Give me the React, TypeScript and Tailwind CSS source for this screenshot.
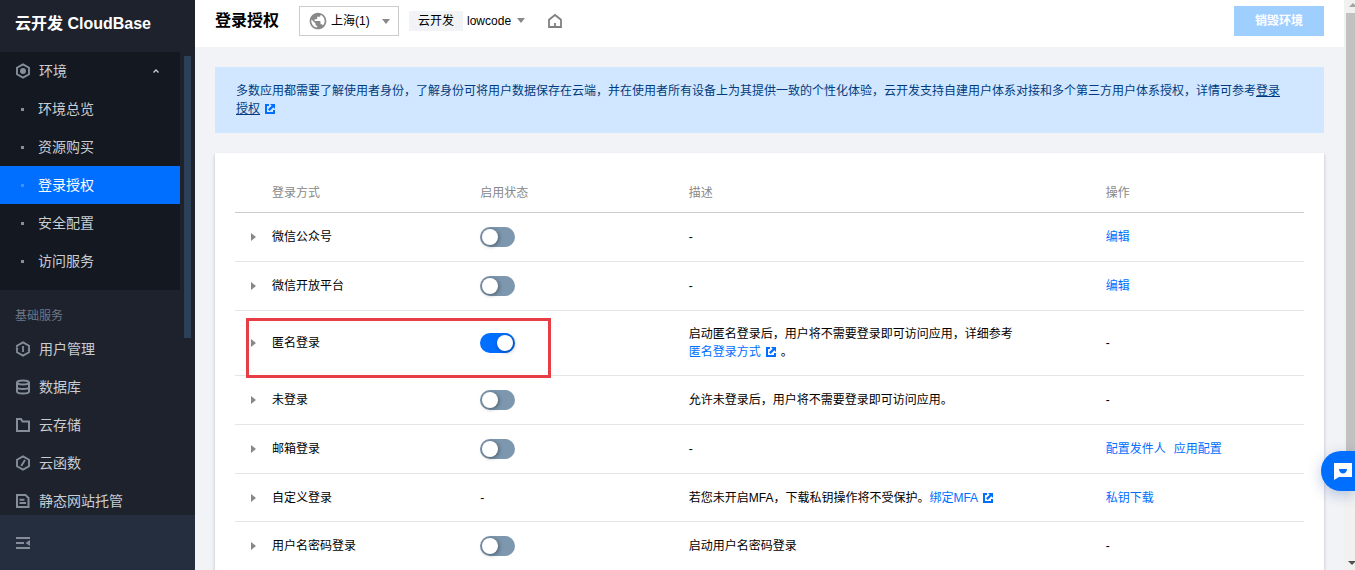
import { ReactNode, useState } from 'react';
import { MdPublic } from 'react-icons/md';

type MenuItem = {
  label: string;
  icon: ReactNode;
};

type LoginMethod = {
  name: string;
  enabled?: boolean;
  description: ReactNode;
  actions: string[];
  highlighted?: boolean;
};

const Icon = ({ children }: { children: ReactNode }) => (
  <svg className="size-4 shrink-0 text-[#858e99]" viewBox="0 0 16 16" fill="none" stroke="currentColor" strokeWidth="2" aria-hidden="true">
    {children}
  </svg>
);

const Caret = ({ className }: { className: string }) => (
  <svg className={`h-[5px] w-2 fill-[#888888] ${className}`} viewBox="0 0 8 5" aria-hidden="true">
    <path d="M0 0h8L4 5z" />
  </svg>
);

const ExternalIcon = () => (
  <svg className="mx-[5px] inline size-[10px] align-[-1px] fill-[#006eff]" viewBox="0 0 10 10" aria-hidden="true">
    <path d="M0 0h4v2H2v6h6V6h2v4H0zM5 0h5v5L8.300 3.300 4.700 7 3 5.300 6.700 1.700z" />
  </svg>
);

const Switch = ({ label, initial }: { label: string; initial: boolean }) => {
  const [checked, setChecked] = useState(initial);

  return (
    <input
      type="checkbox"
      role="switch"
      aria-label={label}
      checked={checked}
      onChange={() => setChecked(!checked)}
      className="block h-5 w-[35px] cursor-pointer appearance-none rounded-full bg-[#7d97ae] p-[2px] before:block before:size-4 before:rounded-full before:bg-white before:shadow-[1px_1px_4px_rgba(0,0,0,0.4)] checked:bg-[#006eff] checked:before:ml-[15px]"
    />
  );
};

const envItems = ['环境总览', '资源购买', '登录授权', '安全配置', '访问服务'];

const serviceItems: MenuItem[] = [
  {
    label: '用户管理',
    icon: <path d="M2 6.500V4.700l6-3.300 6 3.300v3.800M2 7v4.300l6 3.300 6-3.300V10M8 5v6M1 7.200l2 1M13 8.600l2 1" strokeWidth="1.800" />,
  },
  {
    label: '数据库',
    icon: (
      <>
        <ellipse cx="8" cy="3.500" rx="6" ry="2" />
        <path d="M2 3.500v9C2 13.700 4.600 14.500 8 14.500s6-.8 6-2v-9M2 8c0 1.200 2.600 2 6 2s6-.8 6-2" />
      </>
    ),
  },
  { label: '云存储', icon: <path d="M2 14V2h4l1.500 2.500H14V14z" /> },
  {
    label: '云函数',
    icon: <path d="M8 1.300l6 3.400v6.600l-6 3.400-6-3.400V4.700zM10 5L6.200 11" strokeWidth="1.900" />,
  },
  {
    label: '静态网站托管',
    icon: <path d="M2 2h8.500L13.500 5v9H2zM4.500 6.800h5M4.500 10h6.500" />,
  },
];

const loginMethods: LoginMethod[] = [
  { name: '微信公众号', enabled: false, description: '-', actions: ['编辑'] },
  { name: '微信开放平台', enabled: false, description: '-', actions: ['编辑'] },
  {
    name: '匿名登录',
    enabled: true,
    description: (
      <>
        启动匿名登录后，用户将不需要登录即可访问应用，详细参考
        <br />
        <a href="#anonymous" className="text-[#006eff]">匿名登录方式<ExternalIcon /></a>。
      </>
    ),
    actions: [],
    highlighted: true,
  },
  { name: '未登录', enabled: false, description: '允许未登录后，用户将不需要登录即可访问应用。', actions: [] },
  { name: '邮箱登录', enabled: false, description: '-', actions: ['配置发件人', '应用配置'] },
  {
    name: '自定义登录',
    description: (
      <>
        若您未开启MFA，下载私钥操作将不受保护。
        <a href="#mfa" className="text-[#006eff]">绑定MFA<ExternalIcon /></a>
      </>
    ),
    actions: ['私钥下载'],
  },
  { name: '用户名密码登录', enabled: false, description: '启动用户名密码登录', actions: [] },
];

const Sidebar = () => (
  <aside className="flex w-[195px] shrink-0 flex-col bg-[#1e222d] text-sm text-[#c9cdd2]">
    <div className="flex h-[52px] shrink-0 items-center px-[15px] pb-1 text-base font-bold text-white">云开发 CloudBase</div>
    <div className="flex min-h-0 flex-1">
      <nav className="w-[180px] overflow-hidden">
        <div className="bg-[#141821] pb-[10px]">
          <button className="flex h-[38px] w-full items-center gap-2 px-[15px]">
            <Icon>
              <path d="M8 1.300l6 3.400v6.600l-6 3.400-6-3.400V4.700z" strokeWidth="1.900" />
              <circle cx="8" cy="8" r="3" fill="currentColor" stroke="none" />
            </Icon>
            环境
            <svg className="mr-[6px] ml-auto h-1 w-[6px]" viewBox="0 0 6 4" fill="none" stroke="currentColor" strokeWidth="1.300" aria-hidden="true">
              <path d="M.5 3.500L3 1l2.500 2.500" />
            </svg>
          </button>
          <ul>
            {envItems.map((item) => {
              const active = item === '登录授权';
              return (
                <li key={item}>
                  <a
                    href="#env"
                    aria-current={active ? 'page' : undefined}
                    className={`flex h-[38px] items-center gap-[14px] pl-[21px] ${active ? 'bg-[#006eff] text-white' : ''}`}
                  >
                    <span className={`size-[3px] ${active ? 'bg-[#3f92f5]' : 'bg-[#858e99]'}`} />
                    {item}
                  </a>
                </li>
              );
            })}
          </ul>
        </div>
        <h2 className="mt-4 h-6 px-[15px] text-xs leading-5 text-[#6b7785]">基础服务</h2>
        <ul>
          {serviceItems.map((item) => (
            <li key={item.label}>
              <a href="#service" className="flex h-[38px] items-center gap-2 px-[15px]">
                <Icon>{item.icon}</Icon>
                {item.label}
              </a>
            </li>
          ))}
        </ul>
      </nav>
      <div className="mt-1 ml-1 h-[282px] w-[7px] bg-[#2c4057]" />
    </div>
    <div className="flex h-[55px] shrink-0 items-center bg-[#242e3e] px-[15px]">
      <button aria-label="收起菜单">
        <Icon>
          <path d="M1 3h14M1 8h8M1 13h14" />
          <path d="M15 5v6l-4.500-3z" fill="currentColor" stroke="none" />
        </Icon>
      </button>
    </div>
  </aside>
);

const TopBar = () => (
  <header className="flex h-[47px] shrink-0 items-center bg-white px-5 pb-[5px] text-black">
    <h1 className="text-base font-bold">登录授权</h1>
    <div className="relative ml-5">
      <MdPublic className="pointer-events-none absolute top-[5px] left-[9px] size-5 text-[#888888]" aria-hidden="true" />
      <select aria-label="地域" className="h-[30px] w-[100px] appearance-none border border-[#cccccc] bg-white pl-[31px]">
        <option>上海(1)</option>
      </select>
      <Caret className="pointer-events-none absolute top-[13px] right-[9px]" />
    </div>
    <label htmlFor="env" className="ml-[10px] flex h-5 items-center bg-[#f2f3f7] px-[9px]">云开发</label>
    <div className="relative ml-1">
      <select id="env" className="h-5 w-[60px] appearance-none">
        <option>lowcode</option>
      </select>
      <Caret className="pointer-events-none absolute top-[7px] right-[2px]" />
    </div>
    <a href="#home" aria-label="首页" className="ml-[20px]">
      <svg className="size-4" viewBox="0 0 16 16" fill="none" stroke="#808080" strokeWidth="1.800" aria-hidden="true">
        <path d="M2 6.700L8 2l6 4.700V14H2zM8 14v-4" />
      </svg>
    </a>
    <button disabled className="ml-auto h-[30px] w-[90px] bg-[#9fcfff] font-bold text-white">销毁环境</button>
  </header>
);

const LoginTable = () => (
  <table className="w-full table-fixed border-separate border-spacing-0 text-left">
    <colgroup>
      <col className="w-[27px]" />
      <col />
      <col />
      <col className="w-[39%]" />
      <col />
    </colgroup>
    <thead>
      <tr className="h-10 text-[#888888] [&>th]:border-b [&>th]:border-[#cccccc] [&>th]:px-[10px] [&>th]:font-normal">
        <th aria-label="展开" />
        <th>登录方式</th>
        <th>启用状态</th>
        <th>描述</th>
        <th>操作</th>
      </tr>
    </thead>
    <tbody>
      {loginMethods.map((method) => (
        <tr key={method.name} className="h-12 [&>td]:border-b [&>td]:border-[#e5e5e5] [&>td]:px-[10px] [&>td]:py-[14px]">
          <td className="relative">
            <button aria-label={`展开${method.name}`} className="ml-[6px] block">
              <svg className="h-2 w-[5px] fill-[#888888]" viewBox="0 0 5 8" aria-hidden="true">
                <path d="M0 0l5 4-5 4z" />
              </svg>
            </button>
            {method.highlighted && (
              <div className="pointer-events-none absolute top-[7px] left-[11px] h-[60px] w-[305px] border-3 border-[#e63e44]" />
            )}
          </td>
          <td>{method.name}</td>
          <td>{method.enabled === undefined ? '-' : <Switch label={method.name} initial={method.enabled} />}</td>
          <td>{method.description}</td>
          <td>
            {method.actions.length > 0 ? (
              <div className="flex gap-2">
                {method.actions.map((action) => (
                  <a key={action} href="#action" className="text-[#006eff]">{action}</a>
                ))}
              </div>
            ) : (
              '-'
            )}
          </td>
        </tr>
      ))}
    </tbody>
  </table>
);

const PageScrollbar = () => (
  <div className="flex w-[11px] shrink-0 flex-col items-end bg-[#f1f1f1]" aria-hidden="true">
    <svg className="h-[13px] w-[9px]" viewBox="0 0 9 13">
      <path d="M3 7l4-4 4 4z" fill="#a3a3a3" />
    </svg>
    <div className="w-[9px] flex-1 bg-[#c1c1c1]" />
    <div className="flex-[0_0_17%]" />
    <svg className="h-[13px] w-[9px]" viewBox="0 0 9 13">
      <path d="M2 4h8L6 8z" fill="#505050" />
    </svg>
  </div>
);

export default function App() {
  return (
    <div className="flex h-screen overflow-hidden bg-[#f2f3f7] font-['Liberation_Sans','Noto_Sans_CJK_SC',sans-serif] text-xs leading-[18px] text-black">
      <Sidebar />
      <div className="flex min-w-0 flex-1 flex-col">
        <TopBar />
        <main className="min-h-0 flex-1 overflow-hidden p-5">
          <div className="bg-[#d0e7ff] py-[15px] pr-10 pl-[21px] text-[#003b80]">
            多数应用都需要了解使用者身份，了解身份可将用户数据保存在云端，并在使用者所有设备上为其提供一致的个性化体验，云开发支持自建用户体系对接和多个第三方用户体系授权，详情可参考
            <a href="#docs"><span className="underline">登录授权</span><ExternalIcon /></a>
          </div>
          <section className="mt-5 bg-white p-5 shadow-[0_2px_3px_rgba(54,58,80,0.3)]">
            <LoginTable />
          </section>
        </main>
      </div>
      <PageScrollbar />
      <button
        aria-label="在线咨询"
        className="fixed right-0 bottom-[79px] flex h-10 w-[34px] items-center rounded-l-full bg-[#006eff] pl-[13px] shadow-[0_4px_14px_rgba(0,50,130,0.25)]"
      >
        <svg className="h-[17px] w-[18px]" viewBox="0 0 18 17" aria-hidden="true">
          <path d="M0 0h18v14H5l-5 3z" fill="#ffffff" />
          <path d="M5 6h8c0 2.500-1.800 4.500-4 4.500S5 8.500 5 6z" fill="#006eff" />
        </svg>
      </button>
    </div>
  );
}
